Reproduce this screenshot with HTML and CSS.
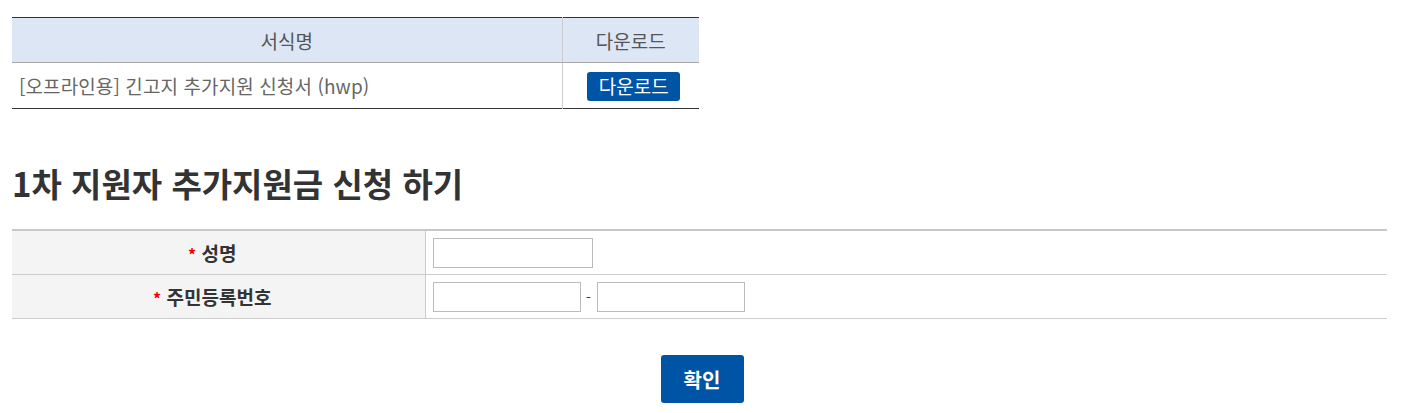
FILE: index.html
```html
<!DOCTYPE html>
<html lang="ko">
<head>
<meta charset="utf-8">
<title>1차 지원자 추가지원금 신청</title>
<link rel="stylesheet" href="styles.css">
</head>
<body>
<div class="page">
  <table class="files">
    <colgroup><col class="c-name"><col class="c-down"></colgroup>
    <thead>
      <tr><th>서식명</th><th>다운로드</th></tr>
    </thead>
    <tbody>
      <tr>
        <td class="fname">[오프라인용] 긴고지 추가지원 신청서 (hwp)</td>
        <td class="fdown"><a class="btn-down" href="#">다운로드</a></td>
      </tr>
    </tbody>
  </table>

  <h2 class="title">1차 지원자 추가지원금 신청 하기</h2>

  <table class="form">
    <colgroup><col class="c-label"><col></colgroup>
    <tbody>
      <tr>
        <th><span class="req">*</span> 성명</th>
        <td><input type="text" class="in-name"></td>
      </tr>
      <tr>
        <th><span class="req">*</span> 주민등록번호</th>
        <td><input type="text" class="in-jumin"><span class="dash">-</span><input type="password" class="in-jumin"></td>
      </tr>
    </tbody>
  </table>

  <div class="actions">
    <button type="button" class="btn-ok">확인</button>
  </div>
</div>
</body>
</html>
```

FILE: styles.css
```css
html, body {
  margin: 0;
  padding: 0;
  background: #fff;
}
body {
  font-family: "Noto Sans CJK KR", "Noto Sans", sans-serif;
  color: #333;
}
.page {
  padding: 17px 0 0 12px;
  width: 1375px;
}
table {
  border-collapse: collapse;
  border-spacing: 0;
}
.files {
  width: 687px;
  border-top: 1px solid #333;
  border-bottom: 1px solid #333;
  font-size: 19px;
}
.c-name { width: 550px; }
.c-down { width: 137px; }
.files th {
  background: #dce6f4;
  color: #555;
  font-weight: 400;
  height: 44px;
  padding: 0;
  border-bottom: 1px solid #a8a8a8;
  text-align: center;
}
.files th + th,
.files td + td {
  border-left: 1px solid #ccc;
}
.files td {
  height: 45px;
  padding: 0;
}
.fname {
  color: #666;
  padding-left: 7px !important;
  font-weight: 400;
  letter-spacing: 0.1px;
}
.fdown {
  text-align: center;
}
.btn-down {
  display: inline-block;
  width: 93px;
  height: 29px;
  line-height: 28px;
  background: #0054a6;
  color: #fff;
  text-decoration: none;
  border-radius: 3px;
  font-size: 19px;
  vertical-align: middle;
  margin: 1px 0 0 6px;
}
.title {
  margin: 52px 0 0 0;
  font-size: 33px;
  line-height: 44px;
  font-weight: 700;
  color: #333;
}
.form {
  margin-top: 24px;
  width: 1375px;
  border-top: 2px solid #c8c8c8;
}
.c-label { width: 413px; }
.form th {
  background: #f4f4f4;
  font-size: 19px;
  font-weight: 700;
  color: #333;
  text-align: center;
  padding: 0 12px 0 0;
  height: 43px;
  border-bottom: 1px solid #ccc;
  border-right: 1px solid #ccc;
}
.form td {
  padding: 0 0 0 7px;
  height: 43px;
  border-bottom: 1px solid #ccc;
}
.req {
  color: #e00;
  font-size: 16px;
}
input {
  box-sizing: border-box;
  height: 30px;
  border: 1px solid #bbb;
  border-radius: 0;
  padding: 0 6px;
  margin: 0;
  vertical-align: middle;
  font-family: inherit;
  background: #fff;
}
.in-name { width: 160px; }
.in-jumin { width: 148px; }
.dash {
  display: inline-block;
  width: 16px;
  text-align: center;
  font-size: 14px;
  color: #333;
  vertical-align: middle;
}
.actions {
  text-align: center;
  padding-top: 36px;
  margin-left: 5px;
}
.btn-ok {
  width: 83px;
  height: 48px;
  border: 0;
  border-radius: 3px;
  background: #0054a6;
  color: #fff;
  font-family: inherit;
  font-size: 20px;
  font-weight: 700;
  cursor: pointer;
}
```
